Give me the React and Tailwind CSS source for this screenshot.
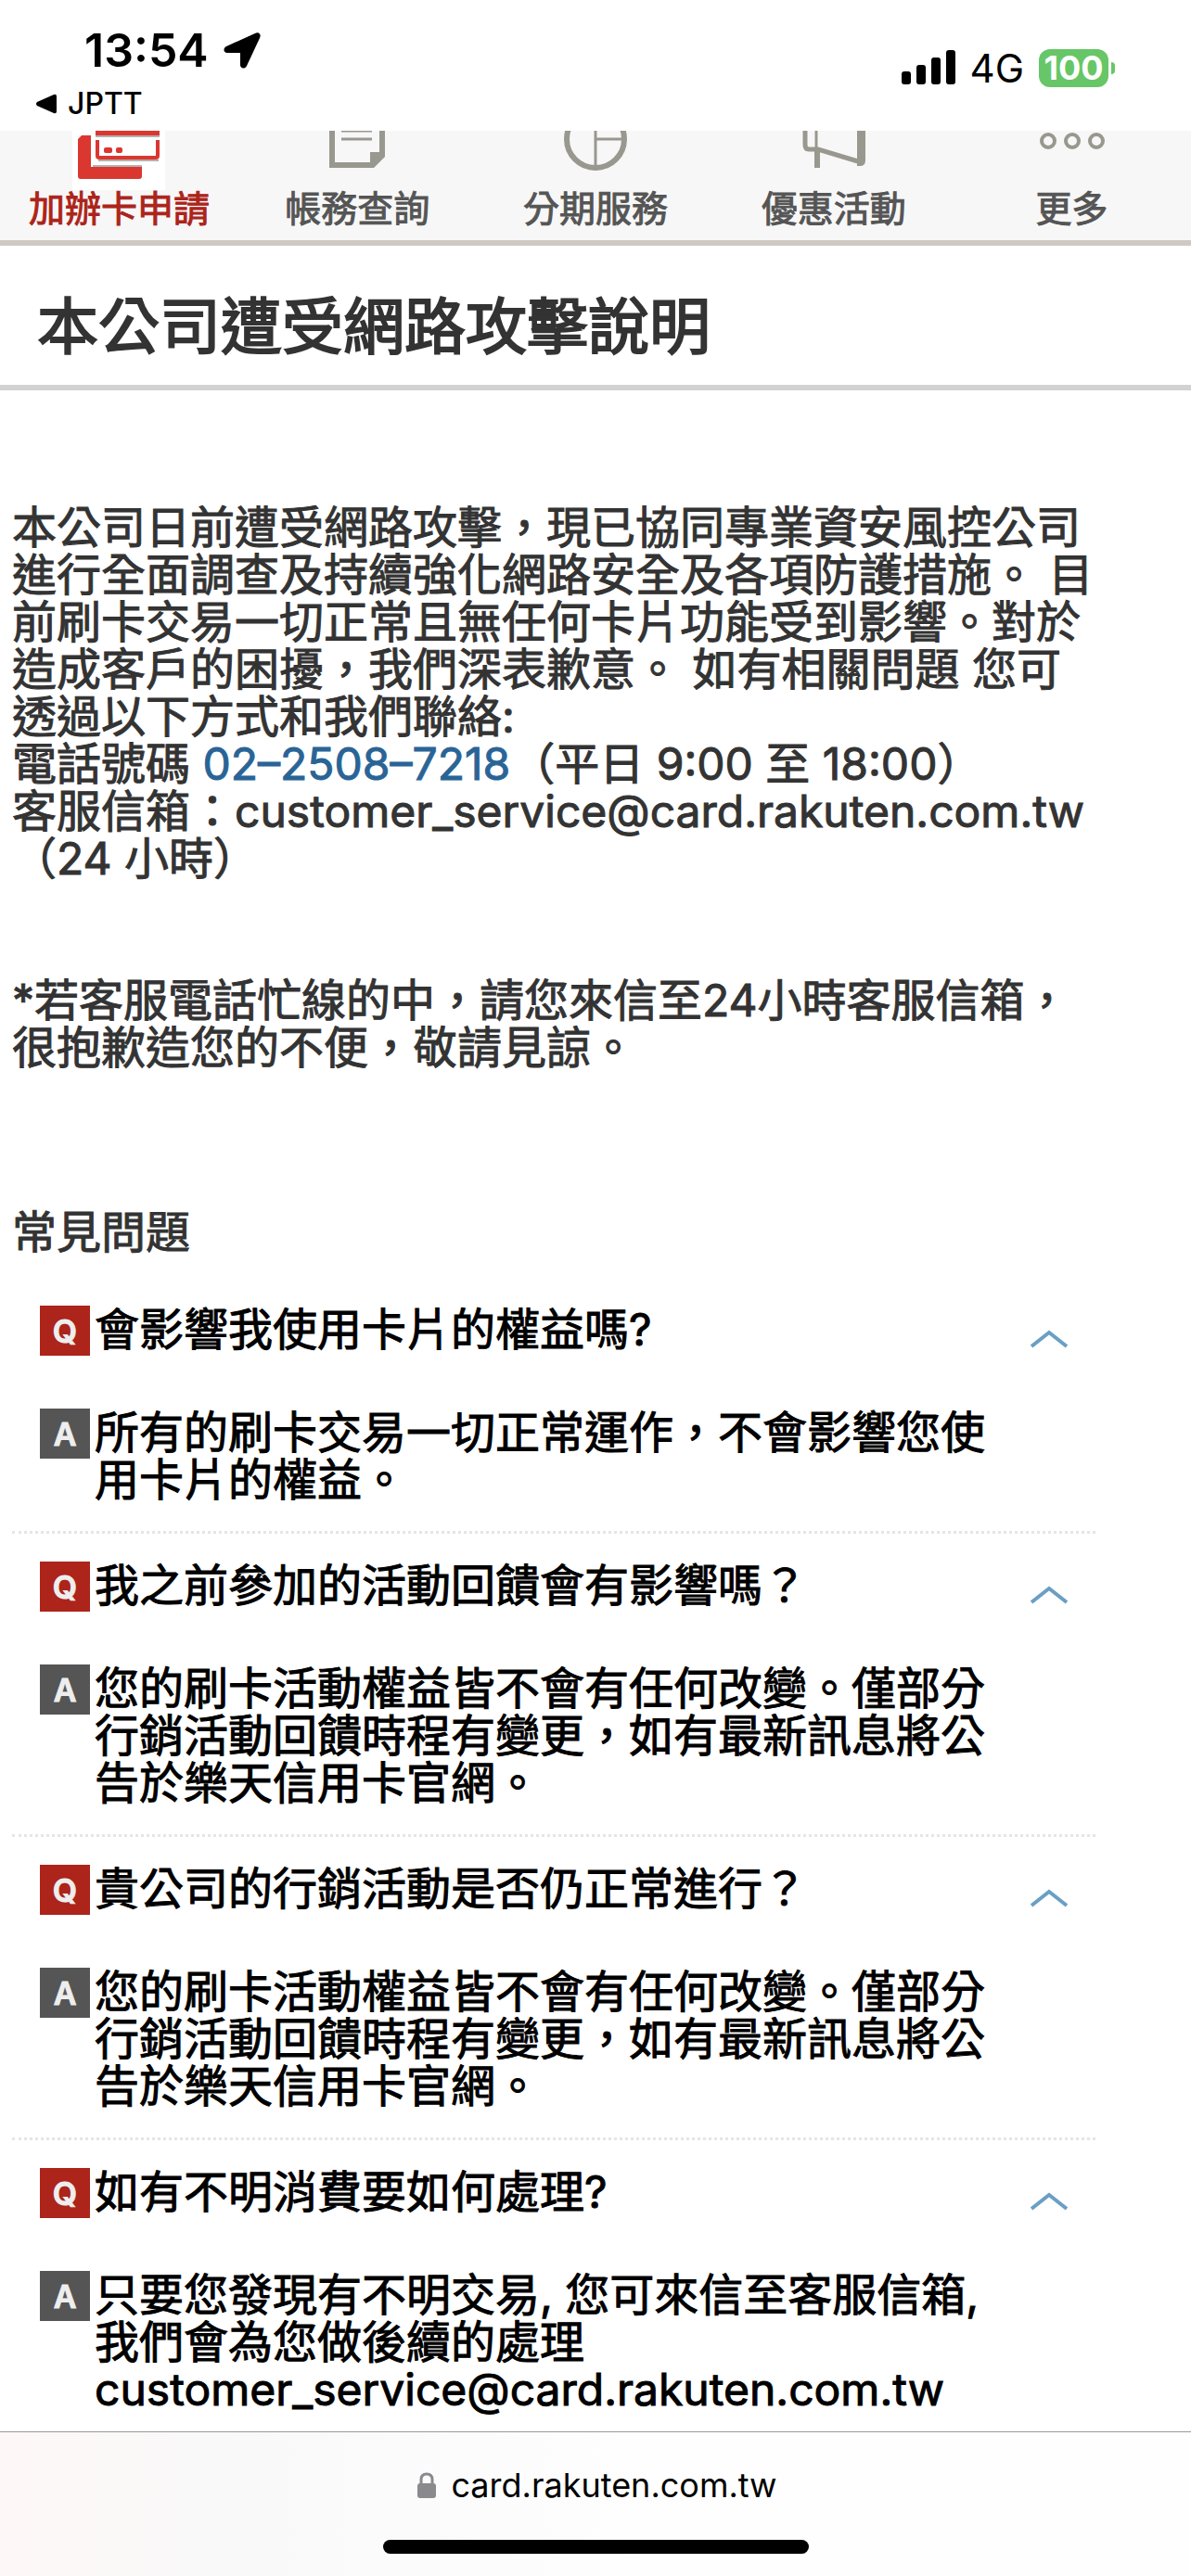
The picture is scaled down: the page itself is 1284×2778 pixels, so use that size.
import { useState } from 'react';

const navItems = [
  { label: '加辦卡申請', icon: CardIcon, active: true },
  { label: '帳務查詢', icon: BillIcon },
  { label: '分期服務', icon: PieIcon },
  { label: '優惠活動', icon: PromoIcon },
  { label: '更多', icon: MoreIcon },
];

const faqs = [
  {
    question: '會影響我使用卡片的權益嗎?',
    answer: '所有的刷卡交易一切正常運作，不會影響您使用卡片的權益。',
  },
  {
    question: '我之前參加的活動回饋會有影響嗎？',
    answer: '您的刷卡活動權益皆不會有任何改變。僅部分行銷活動回饋時程有變更，如有最新訊息將公告於樂天信用卡官網。',
  },
  {
    question: '貴公司的行銷活動是否仍正常進行？',
    answer: '您的刷卡活動權益皆不會有任何改變。僅部分行銷活動回饋時程有變更，如有最新訊息將公告於樂天信用卡官網。',
  },
  {
    question: '如有不明消費要如何處理?',
    answer: '只要您發現有不明交易, 您可來信至客服信箱, 我們會為您做後續的處理 customer_service@card.rakuten.com.tw',
  },
];

// Nav icons share a 100x64 box whose top edge is the scrolled-off part of the bar
function CardIcon() {
  return (
    <svg viewBox="0 0 100 64" className="h-16 w-[100px]" aria-hidden="true">
      <rect width="100" height="64" fill="#fff" />
      <path d="M25 6H94M22 38H75M28 32H93" stroke="#b5b0b0" strokeWidth="2" />
      <path d="M6 9L10 5H20V39H75V49Q75 52 72 52H9Q6 52 6 49Z" fill="#da3730" />
      <path d="M25 0H94V5H25Z" fill="#da3730" />
      <path d="M27 10V27Q27 29 29 29H90Q92 29 92 27V10" fill="none" stroke="#da3730" strokeWidth="4" />
      <rect x="34" y="18" width="9" height="6" rx="2" fill="#da3730" />
      <rect x="47" y="18" width="7" height="6" rx="2" fill="#da3730" />
    </svg>
  );
}

function BillIcon() {
  return (
    <svg viewBox="0 0 100 64" className="h-16 w-[100px]" aria-hidden="true">
      <path d="M20 0H26V34H64V23H74V0H80V28L68 40H20Z" fill="#99988f" />
      <path d="M33 0H66M33 9H66" stroke="#99988f" strokeWidth="3" />
    </svg>
  );
}

function PieIcon() {
  return (
    <svg viewBox="0 0 100 64" className="h-16 w-[100px]" aria-hidden="true">
      <circle cx="50" cy="9" r="31" fill="none" stroke="#99988f" strokeWidth="6" />
      <path d="M50 0V38M50 9H80" stroke="#99988f" strokeWidth="3" fill="none" />
    </svg>
  );
}

function PromoIcon() {
  return (
    <svg viewBox="0 0 100 64" className="h-16 w-[100px]" aria-hidden="true">
      <path d="M19 0V15Q19 20 23 20H33L76 33" fill="none" stroke="#99988f" strokeWidth="5" />
      <path d="M31 0V20" stroke="#99988f" strokeWidth="3" />
      <path d="M32 19V40" stroke="#99988f" strokeWidth="6" />
      <path d="M75 0H84V32Q84 38 78 38H75Z" fill="#99988f" />
    </svg>
  );
}

function MoreIcon() {
  return (
    <svg viewBox="0 0 100 64" className="h-16 w-[100px]" aria-hidden="true">
      <g fill="none" stroke="#99988f" strokeWidth="4">
        <circle cx="24" cy="11" r="7" />
        <circle cx="50" cy="11" r="7" />
        <circle cx="76" cy="11" r="7" />
      </g>
    </svg>
  );
}

function StatusBar() {
  return (
    <header className="flex h-[141px] items-start justify-between pt-6 pr-[82px] pl-[39px] text-black">
      <div>
        <div className="flex h-[60px] items-center gap-4 pl-[52px]">
          <span className="text-[50px] font-semibold">13:54</span>
          <svg viewBox="0 0 40 39" className="h-[39px] w-10" aria-hidden="true">
            <path d="M34 1C38 -1 41 2 39 6L25 36C23 40 18 39 18 35V22H4C0 22 -1 17 3 15Z" />
          </svg>
        </div>
        <a href="#jptt" className="flex h-14 items-center gap-3">
          <svg viewBox="0 0 22 22" className="size-[22px]" aria-hidden="true">
            <path d="M19 1Q22 0 22 3V19Q22 22 19 21L1 13Q-1 11 1 9Z" />
          </svg>
          <span className="text-[32px] font-medium">JPTT</span>
        </a>
      </div>
      <div className="flex h-[98px] items-center gap-4">
        <svg viewBox="0 0 58 38" className="h-[38px] w-[58px]" aria-hidden="true">
          <rect x="0" y="23" width="10" height="14" rx="3" />
          <rect x="16" y="16" width="10" height="21" rx="3" />
          <rect x="32" y="8" width="10" height="29" rx="3" />
          <rect x="48" y="0" width="10" height="37" rx="3" />
        </svg>
        <span className="text-[42px]">4G</span>
        <div className="flex items-center gap-[3px]">
          <span className="flex h-[41px] w-[75px] items-center justify-center rounded-xl bg-[#67c667] text-[36px] font-bold text-white">
            100
          </span>
          <span className="h-[13px] w-1 rounded-r-full bg-[#67c667]" />
        </div>
      </div>
    </header>
  );
}

function FaqItem({ question, answer }) {
  const [open, setOpen] = useState(true);

  return (
    <li className="border-b-3 border-dotted border-[#e5e5e5] p-[30px] last:border-b-0 last:pb-[18px]">
      <button
        type="button"
        aria-expanded={open}
        onClick={() => setOpen(!open)}
        className="flex w-full items-start text-left"
      >
        <Badge className="bg-[#ac241a]">Q</Badge>
        <span className="flex-1">{question}</span>
        <svg
          viewBox="0 0 40 20"
          className={open ? 'mt-[26px] h-5 w-10' : 'mt-[26px] h-5 w-10 rotate-180'}
          aria-hidden="true"
        >
          <path d="M1 18L20 3L39 18" fill="none" stroke="#6b9fc4" strokeWidth="4" />
        </svg>
      </button>
      {open && (
        <div className="mt-[57px] flex items-start pr-20">
          <Badge className="bg-[#555]">A</Badge>
          <p className="flex-1">{answer}</p>
        </div>
      )}
    </li>
  );
}

function Badge({ className, children }) {
  return (
    <span
      className={`mr-[5px] flex size-[54px] shrink-0 items-center justify-center text-[34px] font-semibold text-[#eee] ${className}`}
    >
      {children}
    </span>
  );
}

export default function App() {
  return (
    <div
      lang="zh-TW"
      className="flex min-h-screen flex-col bg-white font-['Inter','Noto_Sans_CJK_TC',sans-serif] text-[#333]"
    >
      <StatusBar />

      <nav className="grid grid-cols-5 border-b-6 border-[#cecac3] bg-[#f7f7f7]">
        {navItems.map(({ label, icon: Icon, active }) => (
          <a
            key={label}
            href="#nav"
            className={`flex flex-col items-center pb-[14px] text-[39px] leading-[40px] [-webkit-text-stroke:1px] ${
              active ? 'text-[#ac241a]' : 'text-[#555]'
            }`}
          >
            <Icon />
            {label}
          </a>
        ))}
      </nav>

      <h1 className="border-b-6 border-[#d2d2d2] px-10 pt-[47px] pb-[23px] text-[66px] leading-[80px] [-webkit-text-stroke:2px]">
        本公司遭受網路攻擊說明
      </h1>

      <main className="flex-1 pt-[122px] pr-[103px] pl-[13px] text-[48px] leading-[51px] [-webkit-text-stroke:1px]">
        <p>
          本公司日前遭受網路攻擊，現已協同專業資安風控公司進行全面調查及持續強化網路安全及各項防護措施。 目前刷卡交易一切正常且無任何卡片功能受到影響。對於造成客戶的困擾，我們深表歉意。 如有相關問題 您可透過以下方式和我們聯絡:
          <br />
          電話號碼{' '}
          <a href="tel:0225087218" className="text-[#2a6496]">
            02–2508–7218
          </a>
          （平日 9:00 至 18:00）
          <br />
          客服信箱：customer_service@card.rakuten.com.tw（24 小時）
        </p>
        <p className="mt-[102px]">
          *若客服電話忙線的中，請您來信至24小時客服信箱，很抱歉造您的不便，敬請見諒。
        </p>

        <h2 className="mt-[148px]">常見問題</h2>
        <ul className="mt-6 text-black">
          {faqs.map((faq) => (
            <FaqItem key={faq.question} {...faq} />
          ))}
        </ul>
      </main>

      <footer className="flex h-[156px] flex-col items-center justify-between border-t border-[#999] bg-linear-to-r from-[#fdf8f7] via-[#f9f9f9] via-20% to-[#fefefe] to-55% pt-8 pb-6 text-black">
        <div className="flex items-center gap-4 pl-1 text-[36px] leading-[50px]">
          <svg viewBox="0 0 20 28" className="h-7 w-5" aria-hidden="true">
            <path d="M4 13V8Q4 2 10 2T16 8V13" fill="none" stroke="#8a8a8e" strokeWidth="3" />
            <rect y="12" width="20" height="16" rx="3" fill="#8a8a8e" />
          </svg>
          card.rakuten.com.tw
        </div>
        <div className="h-[15px] w-[459px] rounded-full bg-black" />
      </footer>
    </div>
  );
}
